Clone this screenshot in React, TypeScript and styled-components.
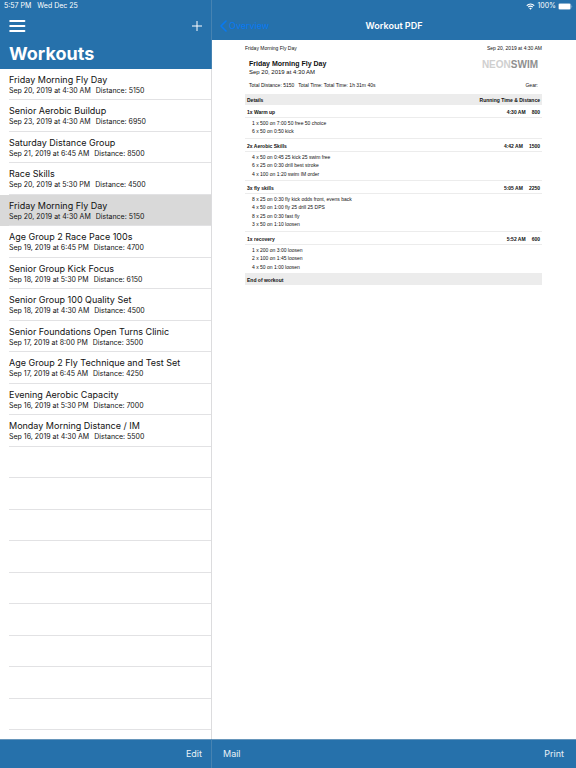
import React, { useState } from 'react';
import styled, { createGlobalStyle } from 'styled-components';

const GlobalStyle = createGlobalStyle`
  * {
    box-sizing: border-box;
  }
  body {
    margin: 0;
    background-color: white;
    font-family: Inter, Roboto, sans-serif;
  }
  button {
    font: inherit;
    color: inherit;
    padding: 0;
    border: 0;
    background: none;
    cursor: pointer;
  }
`;

const blue = '#2671ab';

const Wrapper = styled.div`
  display: grid;
  grid-template-columns: 53fr 91fr;
  grid-template-rows: minmax(0, 1fr);
  height: 100vh;
`;

const Sidebar = styled.aside`
  display: flex;
  flex-direction: column;
  min-width: 0;
  border-right: 1px solid #dcdcde;
`;

const Detail = styled.main`
  display: flex;
  flex-direction: column;
  min-width: 0;
`;

const SidebarHeader = styled.header`
  flex: none;
  height: 69px;
  margin-right: -1px;
  border-right: 1px solid #4683b2;
  background-color: ${blue};
  color: white;
`;

const DetailHeader = styled.header`
  flex: none;
  height: 40px;
  background-color: ${blue};
  color: white;
`;

const StatusBar = styled.div<{ $end?: boolean }>`
  display: flex;
  align-items: center;
  justify-content: ${(props) => (props.$end ? 'flex-end' : 'flex-start')};
  gap: ${(props) => (props.$end ? 2 : 6)}px;
  height: 12px;
  padding: 0 ${(props) => (props.$end ? 3 : 4)}px;
  font-size: 7px;
  line-height: 12px;
`;

const SidebarNav = styled.div`
  display: flex;
  align-items: center;
  justify-content: space-between;
  height: 27px;
  padding: 0 8px 0 9px;
`;

const DetailNav = styled.div`
  display: grid;
  grid-template-columns: 1fr auto 1fr;
  align-items: center;
  height: 27px;
  padding: 0 8px;
`;

const IconButton = styled.button`
  display: flex;
`;

const BackButton = styled.button`
  display: flex;
  align-items: center;
  justify-self: start;
  gap: 2px;
  color: #0879f2;
  font-size: 9px;
`;

const PageTitle = styled.h1`
  margin: 0;
  padding-left: 9px;
  font-size: 18px;
  line-height: 29px;
  font-weight: 700;
`;

const NavTitle = styled.h2`
  margin: 0;
  font-size: 9px;
  font-weight: 600;
`;

const List = styled.ul`
  flex: 1;
  min-height: 0;
  margin: 0;
  padding: 0;
  list-style: none;
  overflow: hidden;
`;

const Item = styled.li<{ $selected?: boolean }>`
  height: 31px;
  padding-left: 9px;
  background-color: ${(props) => (props.$selected ? '#d9d9d9' : 'white')};
  &:nth-child(even) {
    height: 32px;
  }
`;

const ItemButton = styled.button`
  display: flex;
  flex-direction: column;
  width: 100%;
  height: 100%;
  padding-top: 4px;
  border-bottom: 1px solid #e2e2e4;
  text-align: left;
  color: #111;
`;

const EmptyLine = styled.div`
  height: 100%;
  border-bottom: 1px solid #e2e2e4;
`;

const ItemTitle = styled.span`
  font-size: 9px;
  line-height: 13px;
  white-space: nowrap;
`;

const ItemInfo = styled.span`
  display: flex;
  gap: 5px;
  font-size: 7px;
  line-height: 9px;
  white-space: nowrap;
`;

const Toolbar = styled.footer<{ $divider?: boolean }>`
  display: flex;
  flex: none;
  align-items: center;
  justify-content: space-between;
  height: 29px;
  padding: 0 ${(props) => (props.$divider ? 9 : 12)}px 2px 11px;
  margin-right: ${(props) => (props.$divider ? -1 : 0)}px;
  border-top: 1px solid #6796bb;
  border-right: ${(props) => (props.$divider ? '1px solid #4683b2' : '0')};
  background-color: ${blue};
  color: #e9f1f7;
  font-size: 9px;
  button:only-child {
    margin-left: auto;
  }
`;

const Paper = styled.article`
  flex: 1;
  min-height: 0;
  overflow: hidden;
  padding: 4px 34px 0 33px;
  background-color: white;
  color: #111;
  font-family: 'Liberation Sans', Arial, sans-serif;
  font-size: 5px;
  line-height: 8px;
`;

const PaperLine = styled.div`
  display: flex;
  justify-content: space-between;
`;

const PaperHead = styled.div`
  display: flex;
  justify-content: space-between;
  align-items: flex-start;
  padding: 8px 4px 0;
`;

const PaperTitle = styled.h3`
  margin: 0;
  font-size: 7px;
  line-height: 8px;
  font-weight: 700;
`;

const PaperDate = styled.div`
  font-size: 6px;
`;

const Logo = styled.div`
  font-size: 10px;
  line-height: 10px;
  font-weight: 700;
  color: #cfcfcf;
  b {
    color: #8f8f8f;
  }
`;

const Totals = styled.div`
  display: flex;
  gap: 4px;
  padding: 5px 4px;
  span:last-child {
    margin-left: auto;
  }
`;

const Table = styled.table`
  width: 100%;
  border-spacing: 0;
  th,
  td {
    padding: 0 2px;
    text-align: left;
  }
`;

const BarRow = styled.tr`
  height: 11px;
  background-color: #ececec;
  th:last-child {
    text-align: right;
  }
`;

const GroupRow = styled.tr`
  height: 13px;
  font-weight: 700;
  && th,
  && td {
    padding-top: 1px;
    border-bottom: 1px solid #ececec;
  }
  && td {
    text-align: right;
  }
  span {
    margin-left: 6px;
  }
`;

const Group = styled.tbody`
  tr + tr td {
    padding-left: 7px;
    line-height: 8px;
  }
  tr + tr:nth-child(odd) td {
    line-height: 9px;
  }
  tr:nth-child(2) td {
    padding-top: 1px;
  }
  tr:last-child td {
    padding-bottom: 2px;
    border-bottom: 1px solid #ececec;
  }
`;

const workouts = [
    { title: 'Friday Morning Fly Day', date: 'Sep 20, 2019 at 4:30 AM', distance: 5150 },
    { title: 'Senior Aerobic Buildup', date: 'Sep 23, 2019 at 4:30 AM', distance: 6950 },
    { title: 'Saturday Distance Group', date: 'Sep 21, 2019 at 6:45 AM', distance: 8500 },
    { title: 'Race Skills', date: 'Sep 20, 2019 at 5:30 PM', distance: 4500 },
    { title: 'Friday Morning Fly Day', date: 'Sep 20, 2019 at 4:30 AM', distance: 5150 },
    { title: 'Age Group 2 Race Pace 100s', date: 'Sep 19, 2019 at 6:45 PM', distance: 4700 },
    { title: 'Senior Group Kick Focus', date: 'Sep 18, 2019 at 5:30 PM', distance: 6150 },
    { title: 'Senior Group 100 Quality Set', date: 'Sep 18, 2019 at 4:30 AM', distance: 4500 },
    { title: 'Senior Foundations Open Turns Clinic', date: 'Sep 17, 2019 at 8:00 PM', distance: 3500 },
    { title: 'Age Group 2 Fly Technique and Test Set', date: 'Sep 17, 2019 at 6:45 AM', distance: 4250 },
    { title: 'Evening Aerobic Capacity', date: 'Sep 16, 2019 at 5:30 PM', distance: 7000 },
    { title: 'Monday Morning Distance / IM', date: 'Sep 16, 2019 at 4:30 AM', distance: 5500 },
];

const emptyRows = 9;

const sets = [
    {
        name: '1x Warm up',
        time: '4:30 AM',
        distance: 800,
        lines: ['1 x 500 on 7:00 50 free 50 choice', '6 x 50 on 0:50 kick'],
    },
    {
        name: '2x Aerobic Skills',
        time: '4:42 AM',
        distance: 1500,
        lines: ['4 x 50 on 0:45 25 kick 25 swim free', '6 x 25 on 0:30 drill best stroke', '4 x 100 on 1:20 swim IM order'],
    },
    {
        name: '3x fly skills',
        time: '5:05 AM',
        distance: 2250,
        lines: [
            '8 x 25 on 0:30 fly kick odds front, evens back',
            '4 x 50 on 1:00 fly 25 drill 25 DPS',
            '8 x 25 on 0:30 fast fly',
            '3 x 50 on 1:10 loosen',
        ],
    },
    {
        name: '1x recovery',
        time: '5:52 AM',
        distance: 600,
        lines: ['1 x 200 on 3:00 loosen', '2 x 100 on 1:45 loosen', '4 x 50 on 1:00 loosen'],
    },
];

function WorkoutList() {
    const [selected, setSelected] = useState(4);

    return (
        <Sidebar>
            <SidebarHeader>
                <StatusBar>
                    <span>5:57 PM</span>
                    <span>Wed Dec 25</span>
                </StatusBar>
                <SidebarNav>
                    <IconButton aria-label="Menu">
                        <svg width="17" height="14" viewBox="0 0 17 14" stroke="white" strokeWidth="2" strokeLinecap="round">
                            <path d="M1.2 2H15.4M1.2 7H15.4M1.2 12H15.4" />
                        </svg>
                    </IconButton>
                    <IconButton aria-label="Add workout">
                        <svg width="12" height="12" viewBox="0 0 12 12" stroke="white" strokeWidth="1">
                            <path d="M6 1V11M1 6H11" />
                        </svg>
                    </IconButton>
                </SidebarNav>
                <PageTitle>Workouts</PageTitle>
            </SidebarHeader>
            <List>
                {workouts.map((workout, index) => (
                    <Item key={index} $selected={index === selected}>
                        <ItemButton onClick={() => setSelected(index)}>
                            <ItemTitle>{workout.title}</ItemTitle>
                            <ItemInfo>
                                <span>{workout.date}</span>
                                <span>Distance: {workout.distance}</span>
                            </ItemInfo>
                        </ItemButton>
                    </Item>
                ))}
                {Array.from({ length: emptyRows }, (_, index) => (
                    <Item key={`empty-${index}`} aria-hidden>
                        <EmptyLine />
                    </Item>
                ))}
            </List>
            <Toolbar $divider>
                <button>Edit</button>
            </Toolbar>
        </Sidebar>
    );
}

function WorkoutPdf() {
    return (
        <Paper>
            <PaperLine>
                <span>Friday Morning Fly Day</span>
                <span>Sep 20, 2019 at 4:30 AM</span>
            </PaperLine>
            <PaperHead>
                <div>
                    <PaperTitle>Friday Morning Fly Day</PaperTitle>
                    <PaperDate>Sep 20, 2019 at 4:30 AM</PaperDate>
                </div>
                <Logo>
                    NEON<b>SWIM</b>
                </Logo>
            </PaperHead>
            <Totals>
                <span>Total Distance: 5150</span>
                <span>Total Time: Total Time: 1h 31m 40s</span>
                <span>Gear:</span>
            </Totals>
            <Table>
                <thead>
                    <BarRow>
                        <th>Details</th>
                        <th>Running Time &amp; Distance</th>
                    </BarRow>
                </thead>
                {sets.map((set) => (
                    <Group key={set.name}>
                        <GroupRow>
                            <th scope="rowgroup">{set.name}</th>
                            <td>
                                {set.time}
                                <span>{set.distance}</span>
                            </td>
                        </GroupRow>
                        {set.lines.map((line) => (
                            <tr key={line}>
                                <td colSpan={2}>{line}</td>
                            </tr>
                        ))}
                    </Group>
                ))}
                <tfoot>
                    <BarRow>
                        <td colSpan={2}>
                            <b>End of workout</b>
                        </td>
                    </BarRow>
                </tfoot>
            </Table>
        </Paper>
    );
}

function App() {
    return (
        <>
            <GlobalStyle />
            <Wrapper>
                <WorkoutList />
                <Detail>
                    <DetailHeader>
                        <StatusBar $end>
                            <svg width="9" height="7" viewBox="0 0 18 14" fill="none" stroke="white" strokeWidth="2.4">
                                <path d="M1.5 5.2C5.8 1 12.2 1 16.5 5.2M4.4 8.3C7 5.8 11 5.8 13.6 8.3" />
                                <path d="M9 13.4L6.3 10.6C7.8 9.2 10.2 9.2 11.7 10.6Z" fill="white" stroke="none" />
                            </svg>
                            <span>100%</span>
                            <svg width="15" height="7" viewBox="0 0 15 7">
                                <rect x="0.3" y="0.4" width="12.6" height="6.2" rx="1.8" fill="none" stroke="white" strokeOpacity="0.5" strokeWidth="0.6" />
                                <rect x="0.8" y="0.8" width="11.6" height="5.4" rx="1.2" fill="white" />
                                <path d="M13.6 2.4C14.4 2.7 14.4 4.3 13.6 4.6Z" fill="white" fillOpacity="0.5" />
                            </svg>
                        </StatusBar>
                        <DetailNav>
                            <BackButton>
                                <svg width="7" height="12" viewBox="0 0 7 12" fill="none" stroke="currentColor" strokeWidth="1.6" strokeLinecap="round" strokeLinejoin="round">
                                    <path d="M6 1L1 6L6 11" />
                                </svg>
                                Overview
                            </BackButton>
                            <NavTitle>Workout PDF</NavTitle>
                        </DetailNav>
                    </DetailHeader>
                    <WorkoutPdf />
                    <Toolbar>
                        <button>Mail</button>
                        <button>Print</button>
                    </Toolbar>
                </Detail>
            </Wrapper>
        </>
    );
}

export default App;
